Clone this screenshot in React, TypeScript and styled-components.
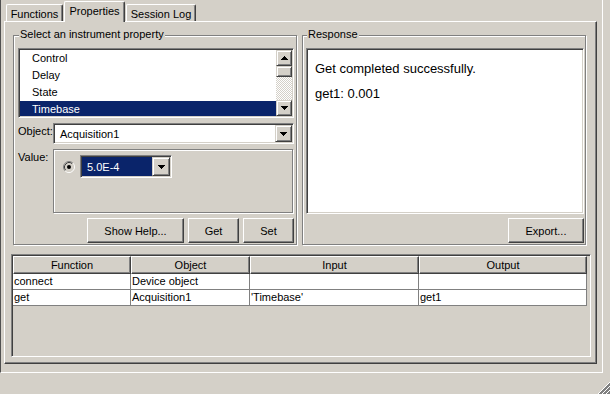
import styled, { createGlobalStyle } from "styled-components";

const face = "#d4d0c8";
const shadow = "#808080";
const dark = "#404040";
const navy = "#0a246a";

const GlobalStyle = createGlobalStyle`
  html, body { margin: 0; padding: 0; }
  body {
    width: 610px;
    height: 394px;
    overflow: hidden;
    background: ${face};
    font-family: "Liberation Sans", Arial, sans-serif;
    font-size: 11px;
    color: #000;
  }
  * { box-sizing: border-box; }
`;

const Window = styled.div`
  width: 610px;
  height: 394px;
  display: flex;
  flex-direction: column;
  background: ${face};
`;

const Frame = styled.div`
  width: 603px;
  height: 373px;
  border-left: 1px solid #505050;
  border-right: 1px solid #fff;
  border-bottom: 1px solid #fff;
  padding: 0 5px 8px 3px;
  display: flex;
  flex-direction: column;
`;

const TabStrip = styled.div`
  height: 21px;
  flex: none;
  display: flex;
  align-items: flex-end;
  gap: 1px;
  padding-left: 2px;
`;

const Tab = styled.div<{ $active?: boolean; $w: number }>`
  width: ${(p) => p.$w}px;
  height: ${(p) => (p.$active ? 21 : 17)}px;
  margin-bottom: ${(p) => (p.$active ? -1 : 0)}px;
  position: relative;
  z-index: ${(p) => (p.$active ? 1 : 0)};
  background: ${face};
  border-top: 1px solid #fff;
  border-left: 1px solid #fff;
  border-right: 1px solid ${dark};
  border-radius: 2px 2px 0 0;
  box-shadow: inset -1px 0 ${shadow};
  padding-top: 3px;
  line-height: 13px;
  text-align: center;
  white-space: nowrap;
`;

const TabBody = styled.div`
  flex: 1;
  display: flex;
  flex-direction: column;
  border-top: 1px solid #fff;
  border-left: 1px solid #fff;
  border-right: 1px solid ${dark};
  border-bottom: 1px solid ${dark};
  box-shadow: inset -1px -1px ${shadow};
  padding: 13px 5px 6px 6px;
`;

const UpperRow = styled.div`
  display: flex;
  gap: 5px;
  padding-left: 2px;
  height: 210px;
  flex: none;
`;

const Group = styled.div`
  position: relative;
  width: 284px;
  height: 210px;
  border: 1px solid ${shadow};
  box-shadow: inset 1px 1px #fff, 1px 1px #fff;
`;

const Legend = styled.span<{ $left: number }>`
  position: absolute;
  top: -8px;
  left: ${(p) => p.$left}px;
  padding: 0 1px;
  line-height: 13px;
  background: ${face};
  white-space: nowrap;
`;

const PropertyGrid = styled.div`
  height: 100%;
  padding: 12px 2px 1px 4px;
  display: grid;
  grid-template-columns: 35px 1fr;
  grid-template-rows: 70px 21px 64px 25px;
  row-gap: 5px;
`;

const sunken = `
  border: 1px solid;
  border-color: ${shadow} #fff #fff ${shadow};
  box-shadow: inset 1px 1px ${dark}, inset -1px -1px ${face};
`;

const raisedThin = `
  border: 1px solid;
  border-color: ${face} ${dark} ${dark} ${face};
  box-shadow: inset 1px 1px #fff, inset -1px -1px ${shadow};
`;

const List = styled.div`
  grid-column: 1 / 3;
  ${sunken}
  padding: 1px;
  background: #fff;
  display: flex;
  overflow: hidden;
`;

const Items = styled.div`
  flex: 1;
  display: flex;
  flex-direction: column;
  overflow: hidden;
`;

const Item = styled.div<{ $selected?: boolean }>`
  height: 17px;
  flex: none;
  line-height: 17px;
  padding-left: 12px;
  background: ${(p) => (p.$selected ? navy : "#fff")};
  color: ${(p) => (p.$selected ? "#fff" : "#000")};
`;

const ScrollBar = styled.div`
  width: 16px;
  flex: none;
  display: flex;
  flex-direction: column;
  background: repeating-conic-gradient(#fff 0 25%, ${face} 0 50%) 0 0 / 2px 2px;
`;

const ArrowButton = styled.div<{ $w?: number; $h?: number }>`
  width: ${(p) => p.$w ?? 16}px;
  height: ${(p) => p.$h ?? 16}px;
  flex: none;
  ${raisedThin}
  background: ${face};
  display: flex;
  align-items: center;
  justify-content: center;
`;

const Thumb = styled.div`
  height: 11px;
  flex: none;
  ${raisedThin}
  background: ${face};
`;

const Track = styled.div`
  flex: 1;
`;

const Label = styled.div`
  padding-top: 2px;
  line-height: 13px;
`;

const Combo = styled.div<{ $w?: number }>`
  ${sunken}
  padding: 1px;
  width: ${(p) => (p.$w ? `${p.$w}px` : "auto")};
  display: flex;
  background: #fff;
`;

const ComboField = styled.div<{ $selected?: boolean }>`
  flex: 1;
  padding-left: 5px;
  display: flex;
  align-items: center;
  white-space: nowrap;
  background: ${(p) => (p.$selected ? navy : "#fff")};
  color: ${(p) => (p.$selected ? "#fff" : "#000")};
`;

const ValuePanel = styled.div`
  border: 1px solid ${shadow};
  box-shadow: inset 1px 1px #fff, 1px 1px #fff;
  width: 240px;
  padding: 5px 0 0 9px;
  display: flex;
  align-items: flex-start;
  gap: 5px;
`;

const RadioWrap = styled.div`
  height: 23px;
  display: flex;
  align-items: center;
`;

const ButtonRow = styled.div`
  grid-column: 1 / 3;
  display: flex;
  justify-content: flex-end;
  gap: 4px;
`;

const Button = styled.div<{ $w: number }>`
  width: ${(p) => p.$w}px;
  height: 25px;
  border: 1px solid;
  border-color: #fff ${dark} ${dark} #fff;
  box-shadow: inset -1px -1px ${shadow};
  background: ${face};
  display: flex;
  align-items: center;
  justify-content: center;
  white-space: nowrap;
`;

const ResponseBody = styled.div`
  height: 100%;
  padding: 12px 1px 1px 3px;
  display: flex;
  flex-direction: column;
  gap: 4px;
`;

const TextArea = styled.div`
  height: 166px;
  flex: none;
  ${sunken}
  background: #fff;
  padding: 12px 8px;
  font-size: 13px;
  line-height: 15px;

  p {
    margin: 0 0 10px;
  }
`;

const RightButtons = styled.div`
  display: flex;
  justify-content: flex-end;
`;

const TablePane = styled.div`
  margin-top: 9px;
  flex: 1;
  ${sunken}
  padding: 1px;
  background: ${face};
  overflow: hidden;
`;

const Row = styled.div`
  display: grid;
  grid-template-columns: 118px 119px 169px 168px;
  width: 574px;
`;

const HeadCell = styled.div`
  height: 18px;
  border: 1px solid;
  border-color: #fff ${dark} ${dark} #fff;
  box-shadow: inset -1px -1px ${shadow};
  background: ${face};
  display: flex;
  align-items: center;
  justify-content: center;
`;

const Cell = styled.div`
  height: 16px;
  background: #fff;
  border-right: 1px solid ${shadow};
  border-bottom: 1px solid ${shadow};
  padding-left: 1px;
  line-height: 15px;
  white-space: nowrap;
  overflow: hidden;
`;

const Side = styled.div`
  display: flex;
  height: 373px;
  flex: none;
`;

const StatusBar = styled.div`
  flex: 1;
  position: relative;
`;

const Grip = styled.svg`
  position: absolute;
  right: 0;
  bottom: 0;
`;

const TinyArrow = ({ dir }: { dir: "up" | "down" }) => (
  <svg width="7" height="4" viewBox="0 0 7 4" shapeRendering="crispEdges">
    <path
      d={
        dir === "down"
          ? "M0 0h7v1h-7z M1 1h5v1h-5z M2 2h3v1h-3z M3 3h1v1h-1z"
          : "M3 0h1v1h-1z M2 1h3v1h-3z M1 2h5v1h-5z M0 3h7v1h-7z"
      }
      fill="#000"
    />
  </svg>
);

const Radio = () => (
  <svg width="12" height="12" viewBox="0 0 12 12">
    <circle cx="6" cy="6" r="4.5" fill={face} />
    <path d="M2.11 9.89 A5.5 5.5 0 0 1 9.89 2.11" stroke={shadow} fill="none" />
    <path d="M9.89 2.11 A5.5 5.5 0 0 1 2.11 9.89" stroke="#fff" fill="none" />
    <path d="M2.82 9.18 A4.5 4.5 0 0 1 9.18 2.82" stroke={dark} fill="none" />
    <path d="M9.18 2.82 A4.5 4.5 0 0 1 2.82 9.18" stroke={face} fill="none" />
    <circle cx="6" cy="6" r="2" fill="#000" />
  </svg>
);

const properties = ["Control", "Delay", "State", "Timebase"];

const rows = [
  ["connect", "Device object", "", ""],
  ["get", "Acquisition1", "'Timebase'", "get1"],
];

export default function App() {
  return (
    <Window>
      <GlobalStyle />
      <Side>
        <Frame>
          <TabStrip>
            <Tab $w={57}>Functions</Tab>
            <Tab $w={61} $active>
              Properties
            </Tab>
            <Tab $w={70}>Session Log</Tab>
          </TabStrip>
          <TabBody>
            <UpperRow>
              <Group>
                <Legend $left={5}>Select an instrument property</Legend>
                <PropertyGrid>
                  <List>
                    <Items>
                      {properties.map((p) => (
                        <Item key={p} $selected={p === "Timebase"}>
                          {p}
                        </Item>
                      ))}
                    </Items>
                    <ScrollBar>
                      <ArrowButton>
                        <TinyArrow dir="up" />
                      </ArrowButton>
                      <Thumb />
                      <Track />
                      <ArrowButton>
                        <TinyArrow dir="down" />
                      </ArrowButton>
                    </ScrollBar>
                  </List>
                  <Label>Object:</Label>
                  <Combo>
                    <ComboField>Acquisition1</ComboField>
                    <ArrowButton $w={17} $h={17}>
                      <TinyArrow dir="down" />
                    </ArrowButton>
                  </Combo>
                  <Label>Value:</Label>
                  <ValuePanel>
                    <RadioWrap>
                      <Radio />
                    </RadioWrap>
                    <Combo $w={92}>
                      <ComboField $selected>5.0E-4</ComboField>
                      <ArrowButton $w={18} $h={19}>
                        <TinyArrow dir="down" />
                      </ArrowButton>
                    </Combo>
                  </ValuePanel>
                  <ButtonRow>
                    <Button $w={97}>Show Help...</Button>
                    <Button $w={51}>Get</Button>
                    <Button $w={51}>Set</Button>
                  </ButtonRow>
                </PropertyGrid>
              </Group>
              <Group>
                <Legend $left={4}>Response</Legend>
                <ResponseBody>
                  <TextArea>
                    <p>Get completed successfully.</p>
                    <p>get1: 0.001</p>
                  </TextArea>
                  <RightButtons>
                    <Button $w={76}>Export...</Button>
                  </RightButtons>
                </ResponseBody>
              </Group>
            </UpperRow>
            <TablePane>
              <Row>
                {["Function", "Object", "Input", "Output"].map((h) => (
                  <HeadCell key={h}>{h}</HeadCell>
                ))}
              </Row>
              {rows.map((r, i) => (
                <Row key={i}>
                  {r.map((c, j) => (
                    <Cell key={j}>{c}</Cell>
                  ))}
                </Row>
              ))}
            </TablePane>
          </TabBody>
        </Frame>
      </Side>
      <StatusBar>
        <Grip width="12" height="12" viewBox="0 0 12 12" shapeRendering="crispEdges">
          {[0, 4, 8].map((k) => (
            <g key={k}>
              <line x1={k + 0.5} y1="12" x2="12" y2={k + 0.5} stroke="#fff" />
              <line x1={k + 1.5} y1="12" x2="12" y2={k + 1.5} stroke={shadow} />
              <line x1={k + 2.5} y1="12" x2="12" y2={k + 2.5} stroke={shadow} />
            </g>
          ))}
        </Grip>
      </StatusBar>
    </Window>
  );
}
